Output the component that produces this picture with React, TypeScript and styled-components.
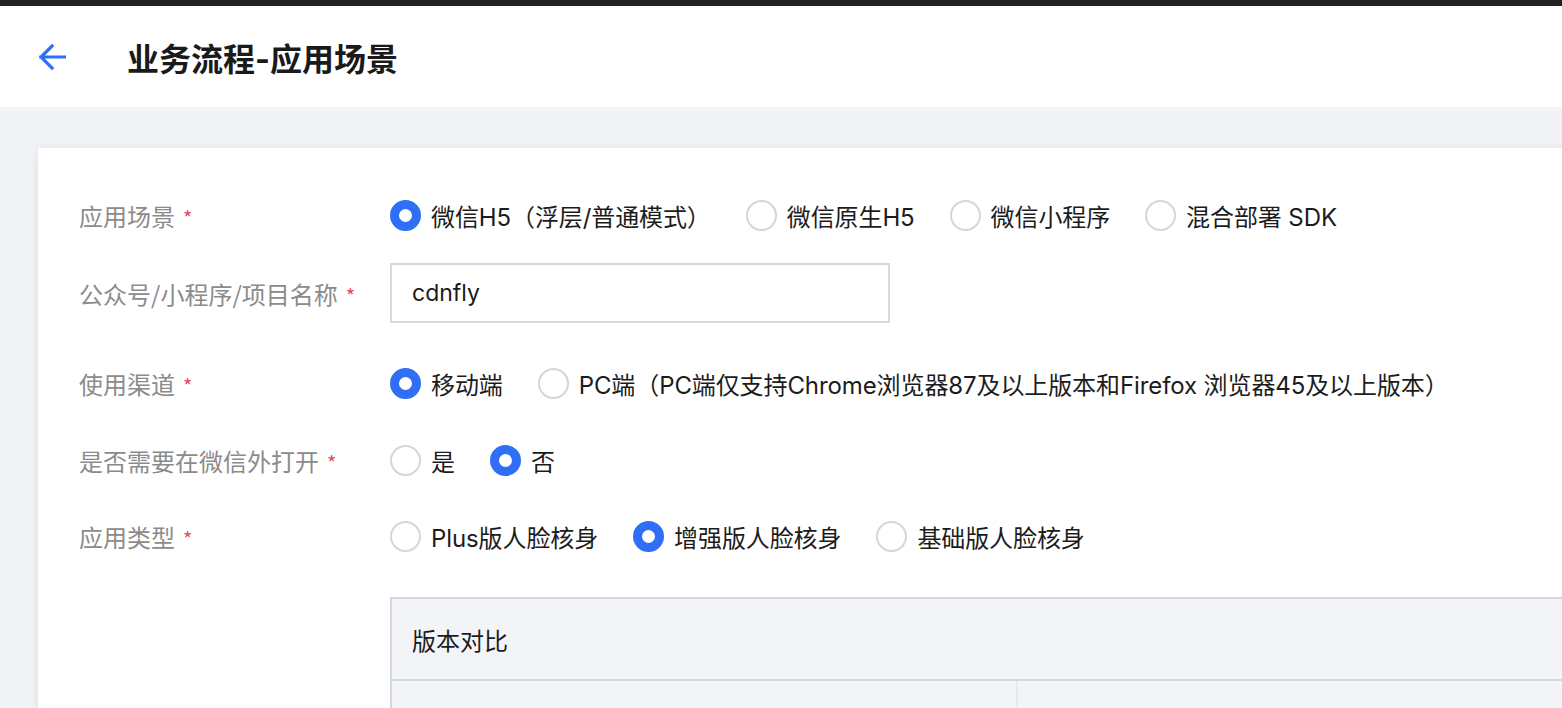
import React from "react";
import styled, { createGlobalStyle } from "styled-components";

const GlobalStyle = createGlobalStyle`
  html, body {
    margin: 0;
    padding: 0;
    background: #f2f3f7;
    overflow: hidden;
  }
  body {
    font-family: Inter, "Noto Sans CJK SC", sans-serif;
    color: #1a1a1a;
  }
  * {
    box-sizing: border-box;
  }
`;

const Page = styled.div`
  width: 100vw;
  height: 708px;
  overflow: hidden;
`;

const TopStrip = styled.div`
  height: 6px;
  background: #222222;
`;

const Header = styled.header`
  height: 101px;
  background: #ffffff;
  display: flex;
  align-items: center;
  padding-left: 38px;
  gap: 61px;
`;

const BackButton = styled.button`
  border: none;
  background: none;
  padding: 0;
  width: 28px;
  height: 28px;
  display: flex;
  cursor: pointer;
`;

const Title = styled.h1`
  margin: 0;
  font-size: 32px;
  font-weight: 700;
  color: #1a1a1a;
`;

const Main = styled.main`
  padding: 41px 0 0 38px;
`;

const Card = styled.section`
  background: #ffffff;
  margin-right: -240px;
  min-height: 700px;
  padding: 47px 0 0 41px;
  box-shadow: 0 2px 10px rgba(0, 0, 0, 0.09);
`;

const FormRow = styled.div<{ $top?: number; $height?: number }>`
  display: grid;
  grid-template-columns: 311px 1fr;
  align-items: center;
  min-height: ${(p) => p.$height ?? 40}px;
  margin-top: ${(p) => p.$top ?? 0}px;
`;

const Label = styled.label`
  display: flex;
  align-items: center;
  gap: 8px;
  font-size: 24px;
  color: #8b8b8b;
  font-family: "Noto Sans CJK SC", sans-serif;
`;

const Required = styled.span`
  color: #e34d59;
  font-size: 20px;
  line-height: 1;
  margin-top: 6px;
`;

const RadioGroup = styled.div`
  display: flex;
  align-items: center;
  gap: 35px;
`;

const RadioItem = styled.label`
  display: flex;
  align-items: center;
  gap: 10px;
  font-size: 24px;
  letter-spacing: -0.1px;
  color: #1c1c1c;
  cursor: pointer;
  white-space: nowrap;
`;

const RadioDot = styled.span<{ $checked?: boolean }>`
  width: 31px;
  height: 31px;
  border-radius: 50%;
  flex: none;
  background: #ffffff;
  border: ${(p) => (p.$checked ? "9.5px solid #2f6ff6" : "2px solid #d2d6de")};
`;

const TextInput = styled.input`
  width: 500px;
  height: 60px;
  border: 2px solid #d4d8e0;
  padding: 0 20px;
  font-family: Inter, "Noto Sans CJK SC", sans-serif;
  font-size: 23px;
  color: #1a1a1a;
  outline: none;
  background: #ffffff;
`;

const Table = styled.div`
  border-left: 2px solid #d3d8e0;
  border-top: 2px solid #d3d8e0;
  background: #f3f4f8;
`;

const TableHead = styled.div`
  height: 82px;
  display: flex;
  align-items: center;
  padding: 0 20px;
  font-size: 24px;
  color: #1c1c1c;
  border-bottom: 2px solid #d3d8e0;
  font-family: "Noto Sans CJK SC", sans-serif;
`;

const TableRow = styled.div`
  display: grid;
  grid-template-columns: 624px 1fr;
  height: 80px;
`;

const TableCell = styled.div`
  & + & {
    border-left: 2px solid #e6e8ec;
  }
`;

type Option = { label: string; checked?: boolean };

const Radios = ({ options }: { options: Option[] }) => (
  <RadioGroup>
    {options.map((o) => (
      <RadioItem key={o.label}>
        <RadioDot $checked={o.checked} />
        {o.label}
      </RadioItem>
    ))}
  </RadioGroup>
);

const ArrowLeft = () => (
  <svg width="28" height="28" viewBox="0 0 28 28" fill="none">
    <path
      d="M26.5 14H3M14 3L3 14L14 25"
      stroke="#2f6ff6"
      strokeWidth="3.2"
      strokeLinecap="square"
      strokeLinejoin="miter"
    />
  </svg>
);

export default function App() {
  return (
    <Page>
      <GlobalStyle />
      <TopStrip />
      <Header>
        <BackButton aria-label="返回">
          <ArrowLeft />
        </BackButton>
        <Title>业务流程-应用场景</Title>
      </Header>
      <Main>
        <Card>
          <FormRow>
            <Label>
              应用场景<Required>*</Required>
            </Label>
            <Radios
              options={[
                { label: "微信H5（浮层/普通模式）", checked: true },
                { label: "微信原生H5" },
                { label: "微信小程序" },
                { label: "混合部署 SDK" },
              ]}
            />
          </FormRow>
          <FormRow $top={28} $height={60}>
            <Label>
              公众号/小程序/项目名称<Required>*</Required>
            </Label>
            <div>
              <TextInput defaultValue="cdnfly" />
            </div>
          </FormRow>
          <FormRow $top={40}>
            <Label>
              使用渠道<Required>*</Required>
            </Label>
            <Radios
              options={[
                { label: "移动端", checked: true },
                {
                  label:
                    "PC端（PC端仅支持Chrome浏览器87及以上版本和Firefox 浏览器45及以上版本）",
                },
              ]}
            />
          </FormRow>
          <FormRow $top={37}>
            <Label>
              是否需要在微信外打开<Required>*</Required>
            </Label>
            <Radios options={[{ label: "是" }, { label: "否", checked: true }]} />
          </FormRow>
          <FormRow $top={36}>
            <Label>
              应用类型<Required>*</Required>
            </Label>
            <Radios
              options={[
                { label: "Plus版人脸核身" },
                { label: "增强版人脸核身", checked: true },
                { label: "基础版人脸核身" },
              ]}
            />
          </FormRow>
          <FormRow $top={41}>
            <span />
            <Table>
              <TableHead>版本对比</TableHead>
              <TableRow>
                <TableCell />
                <TableCell />
              </TableRow>
            </Table>
          </FormRow>
        </Card>
      </Main>
    </Page>
  );
}
